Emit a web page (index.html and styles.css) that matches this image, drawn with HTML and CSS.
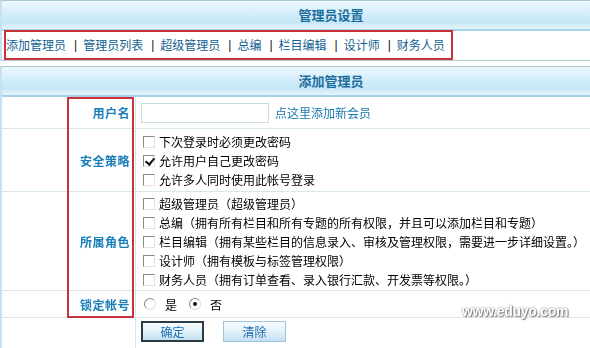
FILE: index.html
```html
<!DOCTYPE html>
<html lang="zh-CN">
<head>
  <meta charset="UTF-8" />
  <title>管理员设置</title>
  <link rel="stylesheet" href="styles.css">
</head>
<body>

  <div class="panel">
    <div class="head">管理员设置</div>
    <div class="nav">
      <div class="nav-box">
        <a href="#">添加管理员</a><span class="sep">|</span>
        <a href="#">管理员列表</a><span class="sep">|</span>
        <a href="#">超级管理员</a><span class="sep">|</span>
        <a href="#">总编</a><span class="sep">|</span>
        <a href="#">栏目编辑</a><span class="sep">|</span>
        <a href="#">设计师</a><span class="sep">|</span>
        <a href="#">财务人员</a>
      </div>
    </div>
  </div>

  <div class="panel second">
    <div class="head">添加管理员</div>
    <form class="rows">
      <div class="row row-user">
        <div class="label">用户名</div>
        <div class="field">
          <input type="text" class="text-input" autofocus>
          <a href="#" class="add-link">点这里添加新会员</a>
        </div>
      </div>

      <div class="row row-policy">
        <div class="label">安全策略</div>
        <div class="field lines">
          <label><input type="checkbox" class="check">下次登录时必须更改密码</label>
          <label><input type="checkbox" class="check" checked>允许用户自己更改密码</label>
          <label><input type="checkbox" class="check">允许多人同时使用此帐号登录</label>
        </div>
      </div>

      <div class="row row-role">
        <div class="label">所属角色</div>
        <div class="field lines">
          <label><input type="checkbox" class="check">超级管理员（超级管理员）</label>
          <label><input type="checkbox" class="check">总编（拥有所有栏目和所有专题的所有权限，并且可以添加栏目和专题）</label>
          <label><input type="checkbox" class="check">栏目编辑（拥有某些栏目的信息录入、审核及管理权限，需要进一步详细设置。）</label>
          <label><input type="checkbox" class="check">设计师（拥有模板与标签管理权限）</label>
          <label><input type="checkbox" class="check">财务人员（拥有订单查看、录入银行汇款、开发票等权限。）</label>
        </div>
      </div>

      <div class="row row-lock">
        <div class="label">锁定帐号</div>
        <div class="field">
          <label class="radio-item"><input type="radio" name="lock" class="radio">是</label>
          <label class="radio-item"><input type="radio" name="lock" class="radio" checked>否</label>
        </div>
      </div>

      <div class="row row-buttons">
        <div class="label"></div>
        <div class="field">
          <button type="button" class="btn btn-default">确定</button>
          <button type="button" class="btn">清除</button>
        </div>
      </div>

      <div class="mark-box"></div>
      <div class="watermark">www.eduyo.com</div>
    </form>
  </div>

</body>
</html>
```

FILE: styles.css
```css
* {
  margin: 0;
  padding: 0;
  box-sizing: border-box;
}

html, body {
  overflow: hidden;
}

body {
  font-family: "Noto Sans CJK SC", "Noto Sans", sans-serif;
  font-size: 12px;
  color: #000;
  background: #fff;
}

a {
  text-decoration: none;
}

.panel {
  width: 660px;
  border-top: 1px solid #a9c6d4;
  border-left: 2px solid #c4e2f2;
}

.panel.second {
  margin-top: 5px;
}

.head {
  height: 30px;
  line-height: 28px;
  text-align: center;
  font-size: 13px;
  font-weight: 700;
  color: #1b6d9d;
  background: linear-gradient(to bottom, #edf8fd 0%, #d4edfa 45%, #c6e6f7 75%, #e6f5fc 100%);
  border-bottom: 2px solid #a5d2e6;
}

.nav {
  height: 30px;
  border-bottom: 1px solid #b4ccd6;
  padding-left: 2px;
}

.nav-box {
  display: inline-flex;
  align-items: center;
  height: 30px;
  border: 2px solid #c8323a;
  padding-right: 6px;
  margin-top: -1px;
}

.nav-box a {
  color: #135f91;
  font-size: 12px;
  line-height: 16px;
}

.sep {
  color: #111;
  font-family: "Liberation Sans", sans-serif;
  margin: 0 6px 0 8px;
}

.rows {
  position: relative;
}

.row {
  display: grid;
  grid-template-columns: 134px 1fr;
  border-bottom: 1px solid #d8e6ed;
}

.label {
  display: flex;
  align-items: center;
  justify-content: flex-end;
  padding-right: 5px;
  border-right: 1px solid #d8e6ed;
  font-weight: 700;
  font-size: 12px;
  letter-spacing: 0.5px;
  color: #1a7fb8;
}

.field {
  padding-left: 7px;
  display: flex;
  align-items: center;
}

.row-user .field {
  height: 31px;
  padding-left: 5px;
}

.text-input {
  width: 128px;
  height: 20px;
  border: 1px solid #c9dce7;
  outline: none;
  font: inherit;
  padding: 0 3px;
}

.add-link {
  margin-left: 6px;
  color: #1a78ae;
}

.lines {
  flex-direction: column;
  align-items: flex-start;
}

.lines label {
  display: flex;
  align-items: center;
  height: 19px;
  white-space: nowrap;
}

.row-policy .lines {
  padding-top: 3px;
  padding-bottom: 2px;
}

.row-role .lines {
  padding-top: 2px;
  padding-bottom: 1px;
}

.check {
  appearance: none;
  width: 12px;
  height: 12px;
  margin-right: 4px;
  border: 1px solid;
  border-color: #8a8a8a #e2e2e2 #e2e2e2 #8a8a8a;
  background: #fff;
  position: relative;
}

.check:checked::after {
  content: "";
  position: absolute;
  left: 3px;
  top: 0px;
  width: 4px;
  height: 7px;
  border: solid #111;
  border-width: 0 2px 2px 0;
  transform: rotate(40deg);
}

.row-lock .field {
  height: 26px;
}

.radio-item {
  display: flex;
  align-items: center;
  margin-right: 11px;
  margin-left: 1px;
}

.radio {
  appearance: none;
  width: 12px;
  height: 12px;
  margin-right: 9px;
  border-radius: 50%;
  border: 1px solid;
  border-color: #8a8a8a #dedede #dedede #8a8a8a;
  background: #fff;
  position: relative;
}

.radio:checked::after {
  content: "";
  position: absolute;
  left: 3px;
  top: 3px;
  width: 4px;
  height: 4px;
  border-radius: 50%;
  background: #111;
}

.row-buttons {
  border-bottom: none;
}

.row-buttons .field {
  height: 36px;
  padding-left: 5px;
  align-items: flex-start;
  padding-top: 3px;
}

.btn {
  width: 63px;
  height: 21px;
  margin-right: 19px;
  font: inherit;
  font-size: 12px;
  color: #1f6cb0;
  border: 1px solid #9fc3da;
  background: linear-gradient(to bottom, #f7fcff 0%, #e2f1fa 50%, #c4e0f1 100%);
}

.btn-default {
  border: 2px solid #2e3a44;
}

.mark-box {
  position: absolute;
  left: 65px;
  top: 0;
  width: 67px;
  height: 221px;
  border: 2px solid #c8323a;
  pointer-events: none;
}

.watermark {
  position: absolute;
  left: 460px;
  top: 206px;
  font-family: "Liberation Sans", sans-serif;
  font-size: 14px;
  font-weight: 700;
  letter-spacing: -0.3px;
  color: #fff;
  text-shadow: 0 0 2px #666, 1px 1px 1px #888;
}
```
